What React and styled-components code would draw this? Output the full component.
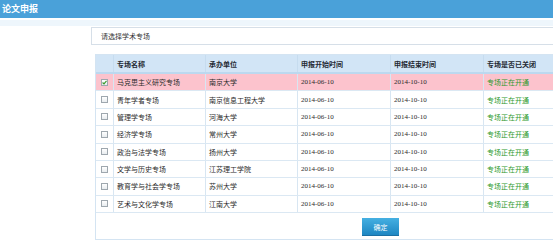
import React from 'react';
import styled, { createGlobalStyle } from 'styled-components';

const GlobalStyle = createGlobalStyle`
	html, body {
		margin: 0;
		padding: 0;
		overflow: hidden;
		background: #fff;
		font-family: "Liberation Serif", "Noto Sans CJK SC", serif;
	}
`;

const TitleBar = styled.div`
	height: 18px;
	line-height: 18px;
	padding-left: 2px;
	background: #4aa1d9;
	color: #fff;
	font-family: "Noto Sans CJK SC", sans-serif;
	font-size: 9px;
	font-weight: bold;
`;

const Glow = styled.div`
	height: 6px;
	margin-top: 2px;
	background: #eef6fc;
`;

const Content = styled.div`
	padding: 1px 0 0 91px;
`;

const SelectBox = styled.div`
	height: 18px;
	box-sizing: border-box;
	border: 1px solid #d6dfe8;
	border-right: none;
	padding-left: 9px;
	line-height: 16px;
	font-family: "Noto Sans CJK SC", sans-serif;
	font-size: 7px;
	color: #333;
`;

const Panel = styled.div`
	margin: 9px 0 0 4px;
	height: 186px;
	box-sizing: border-box;
	border: 1px solid #d4e4f2;
	border-right: none;
	overflow: hidden;
`;

const Row = styled.div`
	display: grid;
	grid-template-columns: 18px 92px 92px 93px 93px 93px;
	height: ${p => (p.$head ? '19px' : '17.375px')};
	box-sizing: border-box;
	background: ${p => (p.$head ? '#d2e5f6' : p.$selected ? '#fcc3cd' : '#fff')};
	border-bottom: ${p => (p.$head ? '2px solid #bcd8ef' : '1px solid #dbe8f3')};
`;

const Cell = styled.div`
	display: flex;
	align-items: center;
	justify-content: ${p => (p.$center ? 'center' : 'flex-start')};
	padding-left: ${p => (p.$center ? '0' : '3px')};
	border-right: 1px solid ${p => (p.$head ? '#c6dcef' : '#d8e6f2')};
	font-size: 7px;
	font-weight: ${p => (p.$head ? 'bold' : 'normal')};
	color: ${p => (p.$green ? '#2e9a2e' : p.$head ? '#1f2a33' : '#2b2b2b')};
	white-space: nowrap;
	overflow: hidden;
`;

const Check = styled.span`
	width: 7px;
	height: 7px;
	box-sizing: border-box;
	border: 1px solid #9ea7ae;
	background: linear-gradient(#fff, #e8ecef);
	display: flex;
	align-items: center;
	justify-content: center;
`;

const ButtonRow = styled.div`
	padding: 5px 0 0 266px;
`;

const Button = styled.div`
	width: 37px;
	height: 18px;
	line-height: 18px;
	text-align: center;
	background: linear-gradient(#45b0e2, #1e86c2);
	border-bottom: 1px solid #1a6fa3;
	box-sizing: border-box;
	color: #fff;
	font-family: "Noto Sans CJK SC", sans-serif;
	font-size: 7px;
`;

const rows = [
	['马克思主义研究专场', '南京大学'],
	['青年学者专场', '南京信息工程大学'],
	['管理学专场', '河海大学'],
	['经济学专场', '常州大学'],
	['政治与法学专场', '扬州大学'],
	['文学与历史专场', '江苏理工学院'],
	['教育学与社会学专场', '苏州大学'],
	['艺术与文化学专场', '江南大学'],
];

const App = () => (
	<>
		<GlobalStyle />
		<TitleBar>论文申报</TitleBar>
		<Glow />
		<Content>
			<SelectBox>请选择学术专场</SelectBox>
			<Panel>
				<Row $head>
					<Cell $head />
					<Cell $head>专场名称</Cell>
					<Cell $head>承办单位</Cell>
					<Cell $head>申报开始时间</Cell>
					<Cell $head>申报结束时间</Cell>
					<Cell $head>专场是否已关闭</Cell>
				</Row>
				{rows.map(([name, unit], i) => (
					<Row key={name} $selected={i === 0}>
						<Cell $center>
							<Check>
								{i === 0 && (
									<svg width="5" height="5" viewBox="0 0 5 5">
										<path d="M0.6 2.5 L2 3.9 L4.5 0.9" fill="none" stroke="#3a9a2a" strokeWidth="1.1" />
									</svg>
								)}
							</Check>
						</Cell>
						<Cell>{name}</Cell>
						<Cell>{unit}</Cell>
						<Cell>2014-06-10</Cell>
						<Cell>2014-10-10</Cell>
						<Cell $green>专场正在开通</Cell>
					</Row>
				))}
				<ButtonRow>
					<Button>确定</Button>
				</ButtonRow>
			</Panel>
		</Content>
	</>
);

export default App;
